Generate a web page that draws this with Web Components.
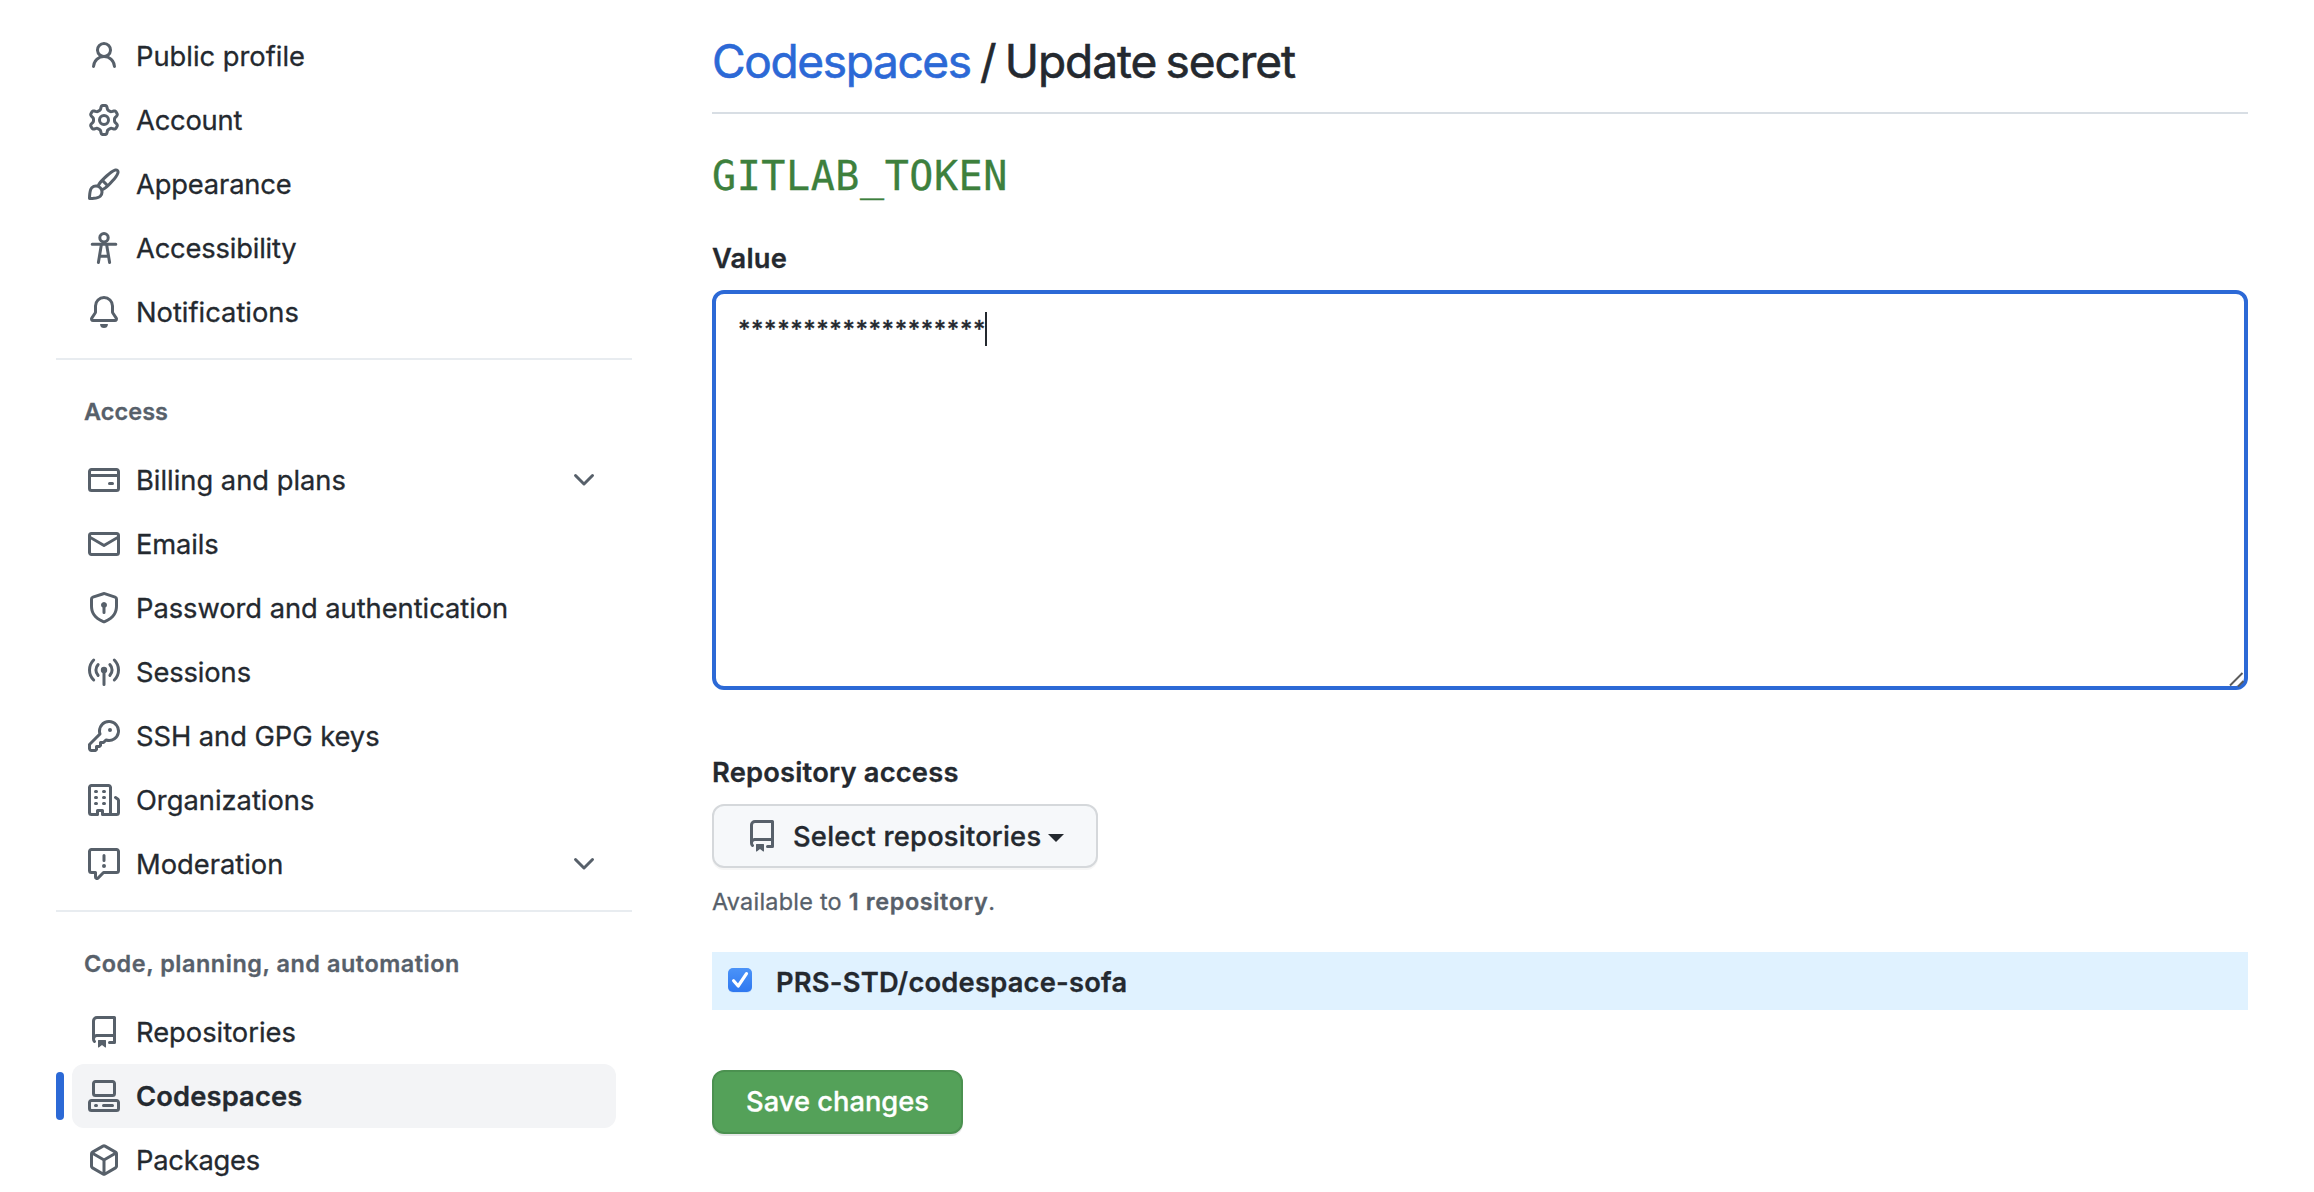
<!DOCTYPE html>
<html lang="en">
<head>
<meta charset="utf-8">
<title>Codespaces / Update secret</title>
<style>
html,body{margin:0;height:1192px;overflow:hidden;background:#fff}
body{font-family:Inter,"Liberation Sans",sans-serif;color:#24292f;-webkit-text-stroke:.3px}
</style>
</head>
<body>
<settings-page>
  <side-nav slot="nav">
    <nav-group>
      <nav-item icon="person">Public profile</nav-item>
      <nav-item icon="gear" track="-.2">Account</nav-item>
      <nav-item icon="brush" track="-.15">Appearance</nav-item>
      <nav-item icon="accessibility" track="-.17">Accessibility</nav-item>
      <nav-item icon="bell">Notifications</nav-item>
    </nav-group>
    <nav-group heading="Access" track=".1">
      <nav-item icon="card" expandable>Billing and plans</nav-item>
      <nav-item icon="mail" track="-.1">Emails</nav-item>
      <nav-item icon="shield" track="-.04">Password and authentication</nav-item>
      <nav-item icon="broadcast" track="-.1">Sessions</nav-item>
      <nav-item icon="key" track="-.04">SSH and GPG keys</nav-item>
      <nav-item icon="organization">Organizations</nav-item>
      <nav-item icon="report" expandable>Moderation</nav-item>
    </nav-group>
    <nav-group heading="Code, planning, and automation" track=".56">
      <nav-item icon="repo">Repositories</nav-item>
      <nav-item icon="codespaces" track=".15" current>Codespaces</nav-item>
      <nav-item icon="package" track="-.24">Packages</nav-item>
    </nav-group>
  </side-nav>
  <secret-form slot="main" name="GITLAB_TOKEN"></secret-form>
</settings-page>

<script>
const ICONS = {
person:'<path d="M10.5 5a2.5 2.5 0 11-5 0 2.5 2.5 0 015 0zm.061 3.073a4 4 0 10-5.123 0 6.004 6.004 0 00-3.431 5.142.75.75 0 001.498.07 4.5 4.5 0 018.99 0 .75.75 0 101.498-.07 6.005 6.005 0 00-3.432-5.142z"/>',
gear:'<path d="M7.429 1.525a6.593 6.593 0 011.142 0c.036.003.108.036.137.146l.289 1.105c.147.56.55.967.997 1.189.174.086.341.183.501.29.417.278.97.423 1.53.27l1.102-.303c.11-.03.175.016.195.046.219.31.41.641.573.989.014.031.022.11-.059.19l-.815.806c-.411.406-.562.957-.53 1.456a4.588 4.588 0 010 .582c-.032.499.119 1.05.53 1.456l.815.806c.08.08.073.159.059.19a6.494 6.494 0 01-.573.99c-.02.029-.086.074-.195.045l-1.103-.303c-.559-.153-1.112-.008-1.529.27-.16.107-.327.204-.5.29-.449.222-.851.628-.998 1.189l-.289 1.105c-.029.11-.101.143-.137.146a6.613 6.613 0 01-1.142 0c-.036-.003-.108-.037-.137-.146l-.289-1.105c-.147-.56-.55-.967-.997-1.189a4.502 4.502 0 01-.501-.29c-.417-.278-.97-.423-1.53-.27l-1.102.303c-.11.03-.175-.016-.195-.046a6.492 6.492 0 01-.573-.989c-.014-.031-.022-.11.059-.19l.815-.806c.411-.406.562-.957.53-1.456a4.587 4.587 0 010-.582c.032-.499-.119-1.05-.53-1.456l-.815-.806c-.08-.08-.073-.159-.059-.19a6.44 6.44 0 01.573-.99c.02-.029.086-.075.195-.045l1.103.303c.559.153 1.112.008 1.529-.27.16-.107.327-.204.5-.29.449-.222.851-.628.998-1.189l.289-1.105c.029-.11.101-.143.137-.146zM8 0c-.236 0-.47.01-.701.03-.743.065-1.29.615-1.458 1.261l-.29 1.106c-.017.066-.078.158-.211.224a5.994 5.994 0 00-.668.386c-.123.082-.233.09-.3.071L3.27 2.776c-.644-.177-1.392.02-1.82.63a7.977 7.977 0 00-.704 1.217c-.315.675-.111 1.422.363 1.891l.815.806c.05.048.098.147.088.294a6.084 6.084 0 000 .772c.01.147-.038.246-.088.294l-.815.806c-.474.469-.678 1.216-.363 1.891.2.428.436.835.704 1.218.428.609 1.176.806 1.82.63l1.103-.303c.066-.019.176-.011.299.071.213.143.436.272.668.386.133.066.194.158.212.224l.289 1.106c.169.646.715 1.196 1.458 1.26a8.094 8.094 0 001.402 0c.743-.064 1.29-.614 1.458-1.26l.29-1.106c.017-.066.078-.158.211-.224a5.98 5.98 0 00.668-.386c.123-.082.233-.09.3-.071l1.102.302c.644.177 1.392-.02 1.82-.63.268-.382.505-.789.704-1.217.315-.675.111-1.422-.364-1.891l-.814-.806c-.05-.048-.098-.147-.088-.294a6.1 6.1 0 000-.772c-.01-.147.039-.246.088-.294l.814-.806c.475-.469.679-1.216.364-1.891a7.992 7.992 0 00-.704-1.218c-.428-.609-1.176-.806-1.82-.63l-1.103.303c-.066.019-.176.011-.299-.071a5.991 5.991 0 00-.668-.386c-.133-.066-.194-.158-.212-.224L10.16 1.29C9.99.645 9.444.095 8.701.031A8.094 8.094 0 008 0zm1.5 8a1.5 1.5 0 11-3 0 1.5 1.5 0 013 0zM11 8a3 3 0 11-6 0 3 3 0 016 0z"/>',
brush:'<path d="M11.134 1.535C9.722 2.562 8.16 4.057 6.889 5.312 5.8 6.387 5.041 7.401 4.575 8.294a3.745 3.745 0 00-3.227 1.054c-.43.431-.69 1.066-.86 1.657a11.982 11.982 0 00-.358 1.914A21.263 21.263 0 000 15.203v.054A.75.75 0 00.743 16h.054a14.404 14.404 0 00.654-.012 21.243 21.243 0 001.63-.118c.62-.07 1.3-.18 1.914-.357.592-.17 1.226-.43 1.657-.861a3.745 3.745 0 001.055-3.217c.908-.461 1.942-1.216 3.04-2.3 1.279-1.262 2.764-2.825 3.775-4.249.501-.706.923-1.428 1.125-2.096.2-.659.235-1.469-.368-2.07-.606-.607-1.42-.55-2.069-.34-.66.213-1.376.646-2.076 1.155zm-3.95 8.48a3.76 3.76 0 00-1.19-1.192 9.758 9.758 0 011.161-1.607l1.658 1.658a9.853 9.853 0 01-1.63 1.142zM12.016 2.749c-1.224.89-2.605 2.189-3.822 3.384l1.718 1.718c1.21-1.205 2.51-2.597 3.387-3.833.47-.662.78-1.227.912-1.662.134-.444.032-.551.009-.575h-.001V1.78c-.014-.014-.112-.113-.548.027-.432.14-.995.462-1.655.942zM1.62 13.089a19.56 19.56 0 00-.104 1.395 19.55 19.55 0 001.396-.104 10.528 10.528 0 001.668-.309c.526-.151.856-.325 1.011-.48a2.25 2.25 0 00-3.182-3.182c-.155.155-.329.485-.48 1.01a10.515 10.515 0 00-.309 1.67z"/>',
accessibility:'<g fill="none" stroke="currentColor" stroke-width="1.5" stroke-linecap="round" stroke-linejoin="round"><circle cx="8" cy="2.85" r="2.1"/><path d="M2.1 6.15h11.8M6.7 6.3L5.2 15.2M9.3 6.3l1.5 8.9M6 12.1h4"/></g>',
bell:'<path d="M8 16a2 2 0 001.985-1.75c.017-.137-.097-.25-.235-.25h-3.5c-.138 0-.252.113-.235.25A2 2 0 008 16z"/><path d="M8 1.5A3.5 3.5 0 004.5 5v2.947c0 .346-.102.683-.294.97l-1.703 2.556a.018.018 0 00-.003.01l.001.006c0 .002.002.004.004.006a.017.017 0 00.006.004l.007.001h10.964l.007-.001a.016.016 0 00.006-.004.016.016 0 00.004-.006l.001-.007a.017.017 0 00-.003-.01l-1.703-2.554a1.75 1.75 0 01-.294-.97V5A3.5 3.5 0 008 1.5zM3 5a5 5 0 0110 0v2.947c0 .05.015.098.042.139l1.703 2.555A1.518 1.518 0 0113.482 13H2.518a1.518 1.518 0 01-1.263-2.36l1.703-2.554A.25.25 0 003 7.947V5z"/>',
card:'<path d="M10.75 9a.75.75 0 000 1.5h1.5a.75.75 0 000-1.5h-1.5z"/><path d="M0 3.75C0 2.784.784 2 1.75 2h12.5c.967 0 1.75.784 1.75 1.75v8.5A1.75 1.75 0 0114.25 14H1.75A1.75 1.75 0 010 12.25v-8.5zm14.5 0V5h-13V3.75a.25.25 0 01.25-.25h12.5a.25.25 0 01.25.25zm0 2.75h-13v5.75c0 .138.112.25.25.25h12.5a.25.25 0 00.25-.25V6.5z"/>',
mail:'<path d="M1.75 2A1.75 1.75 0 000 3.75v8.5C0 13.216.784 14 1.75 14h12.5A1.75 1.75 0 0016 12.25v-8.5A1.75 1.75 0 0014.25 2H1.75zM14.5 4.07v-.32a.25.25 0 00-.25-.25H1.75a.25.25 0 00-.25.25v.32L8 7.88l6.5-3.81zm-13 1.74v6.441c0 .138.112.25.25.25h12.5a.25.25 0 00.25-.25V5.809L8.38 9.397a.75.75 0 01-.76 0L1.5 5.809z"/>',
shield:'<path d="M8.533.133a1.75 1.75 0 00-1.066 0l-5.25 1.68A1.75 1.75 0 001 3.48V7c0 1.566.32 3.182 1.303 4.682.983 1.498 2.585 2.813 5.032 3.855a1.7 1.7 0 001.33 0c2.447-1.042 4.049-2.357 5.032-3.855C14.68 10.182 15 8.566 15 7V3.48a1.75 1.75 0 00-1.217-1.667L8.533.133zm-.61 1.429a.25.25 0 01.153 0l5.25 1.68a.25.25 0 01.174.238V7c0 1.358-.275 2.666-1.057 3.86-.784 1.194-2.121 2.34-4.366 3.297a.2.2 0 01-.154 0c-2.245-.956-3.582-2.104-4.366-3.298C2.775 9.666 2.5 8.36 2.5 7V3.48a.25.25 0 01.174-.237l5.25-1.68zM9.5 6.5a1.5 1.5 0 01-.75 1.3v2.45a.75.75 0 01-1.5 0V7.8A1.5 1.5 0 119.5 6.5z"/>',
broadcast:'<circle cx="8" cy="6.95" r="1.6"/><g fill="none" stroke="currentColor" stroke-width="1.5" stroke-linecap="round"><path d="M8 7v7.2M2.85 2C.05 4.7.05 9.3 2.85 12M13.15 2c2.8 2.7 2.8 7.3 0 10M5.05 4.3c-1.45 1.5-1.45 3.9 0 5.4M10.95 4.3c1.45 1.5 1.45 3.9 0 5.4"/></g>',
key:'<path d="M6.5 5.5a4 4 0 112.731 3.795.75.75 0 00-.768.18L7.44 10.5H6.25a.75.75 0 00-.75.75v1.19l-.06.06H4.25a.75.75 0 00-.75.75v1.19l-.06.06H1.75a.25.25 0 01-.25-.25v-1.69l5.024-5.023a.75.75 0 00.181-.768A3.995 3.995 0 016.5 5.5zm4-5.5a5.5 5.5 0 00-5.348 6.788L.22 11.72a.75.75 0 00-.22.53v2C0 15.216.784 16 1.75 16h2a.75.75 0 00.53-.22l.5-.5a.75.75 0 00.22-.53V14h.75a.75.75 0 00.53-.22l.5-.5a.75.75 0 00.22-.53V12h.75a.75.75 0 00.53-.22l.932-.932A5.5 5.5 0 1010.5 0zm.5 6a1 1 0 100-2 1 1 0 000 2z"/>',
organization:'<path d="M1.5 14.25c0 .138.112.25.25.25H4v-1.25a.75.75 0 01.75-.75h2.5a.75.75 0 01.75.75v1.25h2.25a.25.25 0 00.25-.25V1.75a.25.25 0 00-.25-.25h-8.5a.25.25 0 00-.25.25v12.5zM1.75 16A1.75 1.75 0 010 14.25V1.75C0 .784.784 0 1.75 0h8.5C11.216 0 12 .784 12 1.75v12.5c0 .085-.006.168-.018.25h2.268a.25.25 0 00.25-.25V8.285a.25.25 0 00-.111-.208l-1.055-.703a.75.75 0 11.832-1.248l1.055.703c.487.325.779.871.779 1.456v5.965A1.75 1.75 0 0114.25 16h-3.5a.75.75 0 01-.197-.026c-.099.017-.2.026-.303.026h-3a.75.75 0 01-.75-.75V14h-1v1.25a.75.75 0 01-.75.75h-3zM3 3.75A.75.75 0 013.75 3h.5a.75.75 0 010 1.5h-.5A.75.75 0 013 3.75zM3.75 6a.75.75 0 000 1.5h.5a.75.75 0 000-1.5h-.5zM3 9.75A.75.75 0 013.75 9h.5a.75.75 0 010 1.5h-.5A.75.75 0 013 9.75zM7.75 9a.75.75 0 000 1.5h.5a.75.75 0 000-1.5h-.5zM7 6.75A.75.75 0 017.75 6h.5a.75.75 0 010 1.5h-.5A.75.75 0 017 6.75zM7.75 3a.75.75 0 000 1.5h.5a.75.75 0 000-1.5h-.5z"/>',
report:'<path d="M1.75 1.5a.25.25 0 00-.25.25v9.5c0 .138.112.25.25.25h2a.75.75 0 01.75.75v2.19l2.72-2.72a.75.75 0 01.53-.22h6.5a.25.25 0 00.25-.25v-9.5a.25.25 0 00-.25-.25H1.75zM0 1.75C0 .784.784 0 1.75 0h12.5C15.216 0 16 .784 16 1.75v9.5A1.75 1.75 0 0114.25 13H8.06l-2.573 2.573A1.457 1.457 0 013 14.543V13H1.75A1.75 1.75 0 010 11.25v-9.5zM9 9a1 1 0 11-2 0 1 1 0 012 0zm-.25-5.25a.75.75 0 00-1.5 0v2.5a.75.75 0 001.5 0v-2.5z"/>',
repo:'<path d="M2 2.5A2.5 2.5 0 014.5 0h8.75a.75.75 0 01.75.75v12.5a.75.75 0 01-.75.75h-2.5a.75.75 0 110-1.5h1.75v-2h-8a1 1 0 00-.714 1.7.75.75 0 01-1.072 1.05A2.495 2.495 0 012 11.5v-9zm10.5-1V9h-8c-.356 0-.694.074-1 .208V2.5a1 1 0 011-1h8zM5 12.25v3.25a.25.25 0 00.4.2l1.45-1.087a.25.25 0 01.3 0L8.6 15.7a.25.25 0 00.4-.2v-3.25a.25.25 0 00-.25-.25h-3.5a.25.25 0 00-.25.25z"/>',
codespaces:'<path d="M2 1.75C2 .784 2.784 0 3.75 0h8.5C13.216 0 14 .784 14 1.75v5a1.75 1.75 0 01-1.75 1.75h-8.5A1.75 1.75 0 012 6.75v-5zm1.75-.25a.25.25 0 00-.25.25v5c0 .138.112.25.25.25h8.5a.25.25 0 00.25-.25v-5a.25.25 0 00-.25-.25h-8.5zM0 11.25c0-.966.784-1.75 1.75-1.75h12.5c.966 0 1.75.784 1.75 1.75v3A1.75 1.75 0 0114.25 16H1.75A1.75 1.75 0 010 14.25v-3zM1.75 11a.25.25 0 00-.25.25v3c0 .138.112.25.25.25h12.5a.25.25 0 00.25-.25v-3a.25.25 0 00-.25-.25H1.75z"/><path d="M3 12.75a.75.75 0 01.75-.75h.5a.75.75 0 010 1.5h-.5a.75.75 0 01-.75-.75zm4 0a.75.75 0 01.75-.75h4.5a.75.75 0 010 1.5h-4.5a.75.75 0 01-.75-.75z"/>',
package:'<path d="M8.878.392a1.75 1.75 0 00-1.756 0l-5.25 3.045A1.75 1.75 0 001 4.951v6.098c0 .624.332 1.2.872 1.514l5.25 3.045a1.75 1.75 0 001.756 0l5.25-3.045c.54-.313.872-.89.872-1.514V4.951c0-.624-.332-1.2-.872-1.514L8.878.392zM7.875 1.69a.25.25 0 01.25 0l4.63 2.685L8 7.133 3.245 4.375l4.63-2.685zM2.5 5.677v5.372c0 .09.047.171.125.216l4.625 2.683V8.432L2.5 5.677zm6.25 8.271l4.625-2.683a.25.25 0 00.125-.216V5.677L8.75 8.432v5.516z"/>',
chevron:'<path d="M12.78 5.22a.75.75 0 010 1.06l-4.25 4.25a.75.75 0 01-1.06 0L3.22 6.28a.75.75 0 011.06-1.06L8 8.94l3.72-3.72a.75.75 0 011.06 0z"/>'
};

class Base extends HTMLElement {
  connectedCallback() {
    if (!this.shadowRoot) this.attachShadow({ mode: 'open' }).innerHTML = this.render();
  }
}

customElements.define('oct-icon', class extends Base {
  render() {
    return `<style>:host{display:block;flex:none;width:32px;height:32px;color:#57606a}svg{display:block;width:100%;height:100%}</style>
    <svg viewBox="0 0 16 16" fill="currentColor" fill-rule="evenodd">${ICONS[this.getAttribute('name')]}</svg>`;
  }
});

customElements.define('settings-page', class extends Base {
  render() {
    return `<style>
      :host{display:grid;grid-template-columns:576px 1536px;column-gap:80px;padding-left:56px;height:1192px;overflow:hidden}
    </style><slot name="nav"></slot><slot name="main"></slot>`;
  }
});

customElements.define('side-nav', class extends Base {
  render() {
    return `<style>:host{display:flex;flex-direction:column;padding-top:24px}</style><slot></slot>`;
  }
});

customElements.define('nav-group', class extends Base {
  render() {
    const heading = this.getAttribute('heading');
    const top = heading ? `<h3>${heading}</h3>` : '';
    return `<style>
      :host{display:block}
      :host([heading]){border-top:2px solid #e8ecf0;margin-top:14px}
      h3{margin:0;padding:34px 28px 18px;font-size:23.4px;line-height:36px;font-weight:600;color:#57606a;letter-spacing:${this.getAttribute('track') || 0}px;white-space:nowrap}
    </style>${top}<slot></slot>`;
  }
});

customElements.define('nav-item', class extends Base {
  render() {
    const chevron = this.hasAttribute('expandable') ? '<oct-icon name="chevron"></oct-icon>' : '';
    return `<style>
      :host{display:flex;align-items:center;height:64px;font-size:27.3px;line-height:40px;letter-spacing:${this.getAttribute('track') || 0}px;white-space:nowrap}
      i{flex:none;width:8px;height:48px;border-radius:4px}
      a{flex:none;display:flex;align-items:center;box-sizing:border-box;width:544px;height:64px;margin-left:8px;padding:0 16px;border-radius:12px}
      span{flex:1;padding:2px 0 0 16px}
      :host([current]){font-weight:600}
      :host([current]) i{background:#2c69d6}
      :host([current]) a{background:#f3f4f6}
    </style><i></i><a><oct-icon name="${this.getAttribute('icon')}"></oct-icon><span><slot></slot></span>${chevron}</a>`;
  }
});

customElements.define('secret-value', class extends Base {
  render() {
    return `<style>
      :host{display:flex;position:relative;box-sizing:border-box;height:400px;border:4px solid #2c69d6;border-radius:12px;padding:18px 22px;align-items:flex-start}
      span{font-size:24px;line-height:35px;letter-spacing:.56px;font-weight:500}
      i{width:2px;height:34px;background:#24292f;margin-left:-1px}
      svg{position:absolute;right:-2px;bottom:-3px;width:18px;height:18px}
    </style><span>*******************</span><i></i>
    <svg viewBox="0 0 18 18" fill="none" stroke="#5c5c5c" stroke-width="1.9"><path d="M2 14.5L14.5 2"/><path d="M10 15.5l5.5-5.5"/></svg>`;
  }
});

customElements.define('repo-row', class extends Base {
  render() {
    return `<style>
      :host{display:flex;align-items:center;box-sizing:border-box;height:58px;padding:0 16px;background:#e0f2ff;font-size:27.3px;font-weight:600;letter-spacing:.22px}
      svg{width:24px;height:26px;margin:0 24px 2px 0;flex:none;overflow:visible}
      span{padding-top:2px}
    </style>
    <svg viewBox="0 0 24 26"><defs><linearGradient id="g" x2="0" y2="1"><stop stop-color="#4b93f8"/><stop offset="1" stop-color="#2f78f0"/></linearGradient></defs>
    <rect x="0" y="1.6" width="24" height="24" rx="5" fill="#b9d6f8"/><rect y="1" width="24" height="24" rx="5" fill="url(#g)"/>
    <path d="M5.6 13.8l4.6 5.2 8.3-12.4" fill="none" stroke="#fff" stroke-width="3.2" stroke-linecap="round" stroke-linejoin="round"/></svg><span><slot></slot></span>`;
  }
});

customElements.define('push-button', class extends Base {
  render() {
    return `<style>
      :host{display:inline-flex;align-items:center;box-sizing:border-box;height:64px;border:2px solid #d5d8db;border-radius:12px;background:#f6f8fa;box-shadow:0 2px 0 rgba(27,31,36,.04);font-size:27.3px;font-weight:500;line-height:40px;white-space:nowrap}
      :host([primary]){background:#54a159;border-color:#4b9150;color:#fff;box-shadow:0 2px 0 rgba(27,31,36,.1)}
    </style><slot></slot>`;
  }
});

customElements.define('secret-form', class extends Base {
  render() {
    return `<style>
      :host{display:flex;flex-direction:column;align-items:stretch}
      h2{margin:0;padding:25px 0 15px;height:72px;border-bottom:2px solid #d8dee4;font-size:46px;line-height:72px;font-weight:400;letter-spacing:-1.07px;word-spacing:-2.6px;white-space:nowrap;-webkit-text-stroke:.6px}
      h2 a{color:#2c69d6;letter-spacing:-1.35px}
      h3{margin:32px 0 0;font:400 40px/60px "DejaVu Sans Mono",monospace;letter-spacing:.58px;color:#3d803d}
      label{display:block;font-size:27.3px;font-weight:600;line-height:42px;letter-spacing:.2px}
      .value{margin:32px 0 10px}
      .access{margin:62px 0 10px}
      .pick{width:386px;padding-left:32px;letter-spacing:.23px}
      .pick span{padding:2px 0 0 15px}
      .pick i{margin-left:7px;margin-top:4px;border:8px solid transparent;border-top-color:#24292f;border-bottom:0}
      p{margin:15px 0 32px;font-size:23.4px;line-height:37px;letter-spacing:.25px;color:#57606a}
      b{font-weight:600;letter-spacing:.65px}
      .save{width:251px;justify-content:center;margin-top:60px}
    </style>
    <h2><a>Codespaces</a> / Update secret</h2>
    <h3>${this.getAttribute('name')}</h3>
    <label class="value">Value</label>
    <secret-value></secret-value>
    <label class="access">Repository access</label>
    <push-button class="pick"><oct-icon name="repo"></oct-icon><span>Select repositories</span><i></i></push-button>
    <p>Available to <b>1 repository</b>.</p>
    <repo-row>PRS-STD/codespace-sofa</repo-row>
    <push-button class="save" primary>Save changes</push-button>`;
  }
});
</script>
</body>
</html>
